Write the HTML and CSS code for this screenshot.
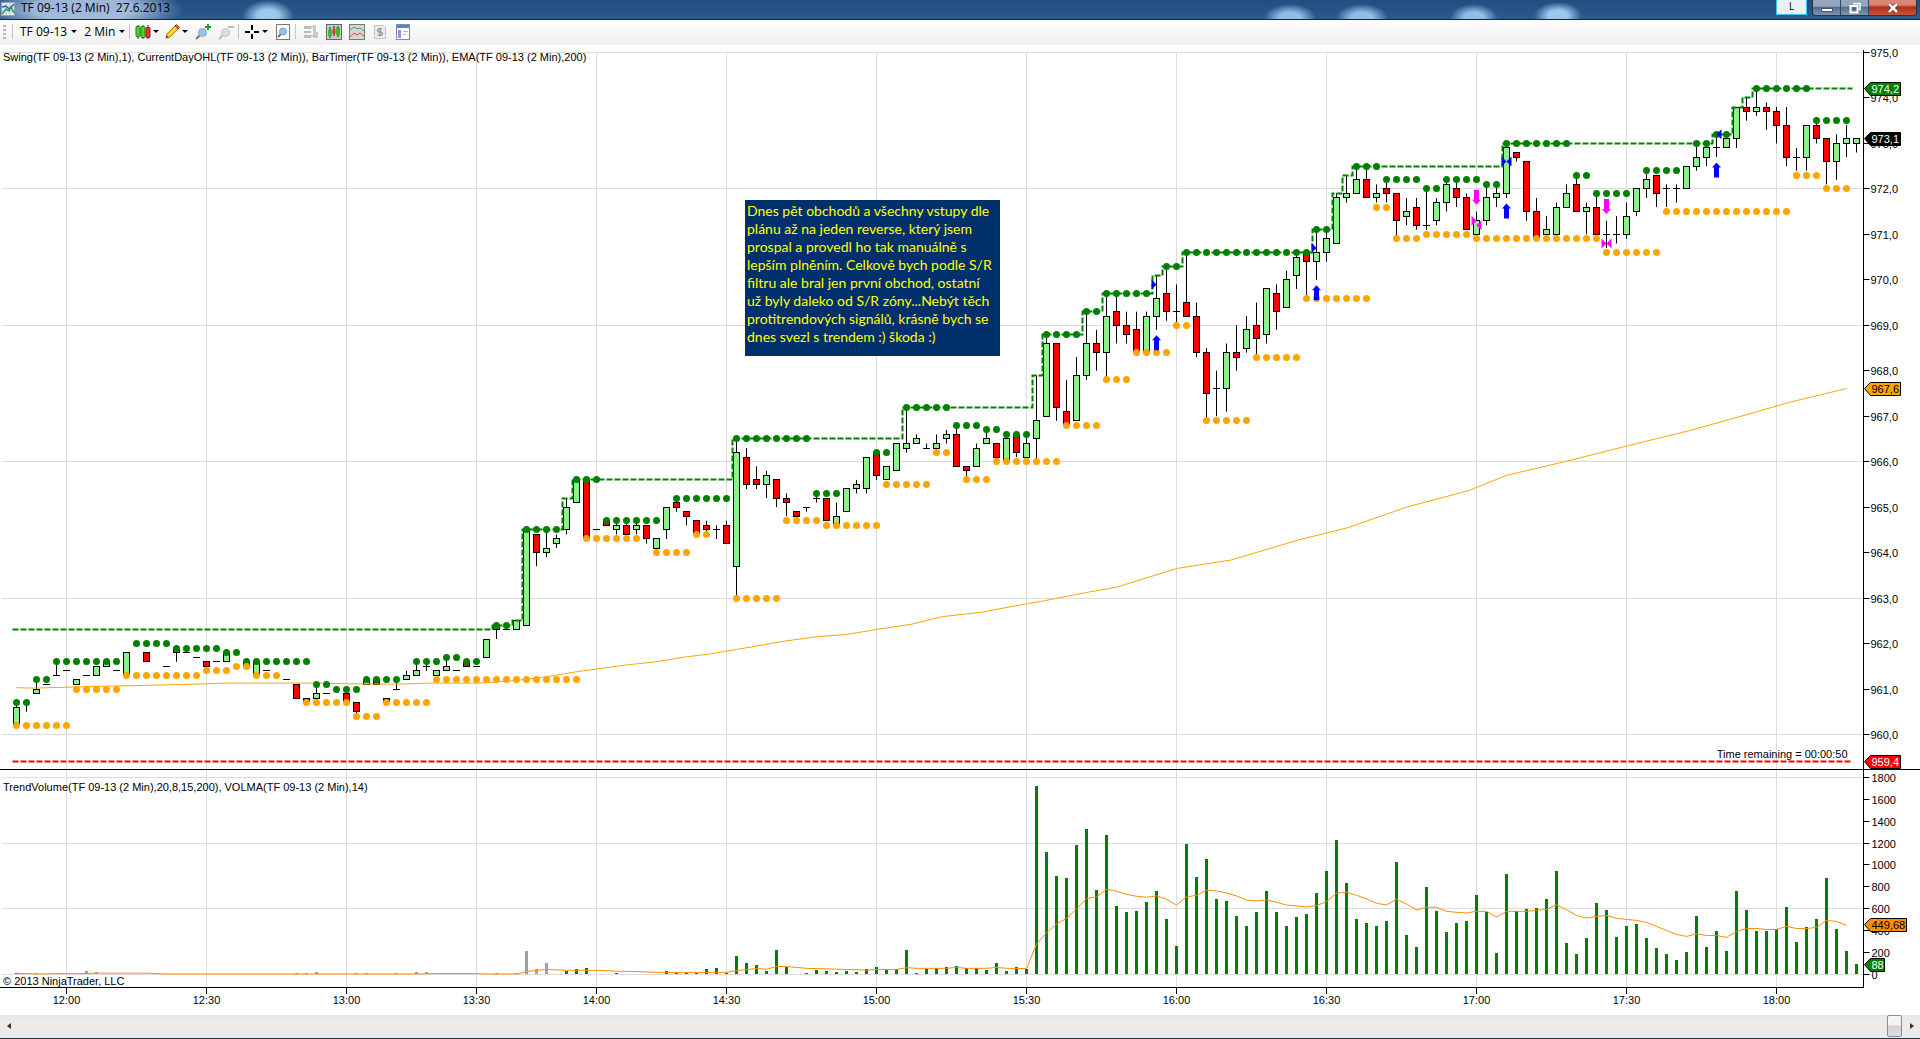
FILE: index.html
```html
<!DOCTYPE html>
<html lang="cs">

<head>
  <meta charset="UTF-8" />
  <meta name="viewport" content="width=device-width, initial-scale=1.0" />
  <title>TF 09-13 (2 Min) 27.6.2013</title>
  <link rel="stylesheet" href="styles.css">
</head>

<body>
  <!-- TITLE BAR -->
  <header class="titlebar">
    <svg class="app-icon" viewBox="0 0 14 14" width="14" height="14">
      <rect x="0.5" y="0.5" width="13" height="13" fill="#e4edf5" stroke="#8fa3b5" />
      <path d="M1 5h12M1 9h12M5 1v12M9 1v12" stroke="#b9c8d6" fill="none" />
      <path d="M1 5l4-1 3 3 5-5" stroke="#2b62c4" stroke-width="1.5" fill="none" />
      <path d="M1 12l4-5 3 2 2-4 3 6" stroke="#2e9a3c" stroke-width="1.5" fill="none" />
    </svg>
    <h1>TF 09-13 (2 Min)&nbsp; 27.6.2013</h1>
    <div class="lang">L</div>
    <div class="window-buttons">
      <button class="win" aria-label="Minimize">
        <svg viewBox="0 0 12 10" width="12" height="10"><rect x="0.5" y="5.5" width="11" height="3" fill="#fff" stroke="#4a5566" /></svg>
      </button>
      <button class="win" aria-label="Restore">
        <svg viewBox="0 0 12 12" width="12" height="12">
          <path d="M4 1.500h7v6h-3" fill="none" stroke="#fff" stroke-width="1.500" />
          <rect x="1.500" y="4" width="7" height="6.500" fill="none" stroke="#fff" stroke-width="2" />
          <rect x="4" y="6" width="2" height="2" fill="#4a5566" />
        </svg>
      </button>
      <button class="win close" aria-label="Close">
        <svg viewBox="0 0 12 10" width="12" height="10">
          <path d="M2 1l8 8M10 1l-8 8" stroke="#5a2a24" stroke-width="4" />
          <path d="M2 1l8 8M10 1l-8 8" stroke="#fff" stroke-width="2.500" />
        </svg>
      </button>
    </div>
  </header>

  <!-- TOOLBAR -->
  <nav class="toolbar">
    <span class="grip"></span>
    <span class="sep"></span>
    <button class="drop">TF 09-13<i class="caret"></i></button>
    <button class="drop">2 Min<i class="caret"></i></button>
    <span class="sep"></span>
    <button class="drop icon" aria-label="Chart style">
      <svg viewBox="0 0 16 16" width="16" height="16">
        <path d="M3 1v14M8 1v14M13 1v14" stroke="#333" />
        <rect x="1" y="2.500" width="4" height="10" rx="1" fill="#4fd32c" stroke="#1f7d10" />
        <rect x="6" y="2.500" width="4" height="11" rx="1" fill="#4fd32c" stroke="#1f7d10" />
        <rect x="11" y="3.500" width="4" height="10" rx="1" fill="#e8382c" stroke="#8d1711" />
      </svg><i class="caret"></i>
    </button>
    <button class="drop icon" aria-label="Drawing tools">
      <svg viewBox="0 0 16 16" width="16" height="16">
        <path d="M2 14l1-4 8-8 3 3-8 8z" fill="#f8d03c" stroke="#b47a12" />
        <path d="M11 2l1.500-1.500 3 3L14 5z" fill="#e4694f" stroke="#a33b2a" />
        <path d="M2 14l.6-2.500 2 2z" fill="#333" />
      </svg><i class="caret"></i>
    </button>
    <button class="icon" aria-label="Zoom in">
      <svg viewBox="0 0 16 16" width="16" height="16">
        <path d="M1 15l4-4" stroke="#777" stroke-width="2" />
        <circle cx="7.500" cy="8.500" r="4" fill="#8fc4ee" stroke="#9aa7b3" />
        <path d="M13 0v6M10 3h6" stroke="#14a32c" stroke-width="2" />
      </svg>
    </button>
    <button class="icon" aria-label="Zoom out" disabled>
      <svg viewBox="0 0 16 16" width="16" height="16">
        <path d="M1 15l4-4" stroke="#bbb" stroke-width="2" />
        <circle cx="7.500" cy="8.500" r="4" fill="#ddd" stroke="#c4c4c4" />
        <path d="M10 3h6" stroke="#bbb" stroke-width="2" />
      </svg>
    </button>
    <span class="sep"></span>
    <button class="drop icon" aria-label="Crosshair">
      <svg viewBox="0 0 16 16" width="16" height="16"><path d="M8 1v5M8 10v5M1 8h5M10 8h5" stroke="#000" stroke-width="2" /></svg><i class="caret"></i>
    </button>
    <button class="icon" aria-label="Data box">
      <svg viewBox="0 0 16 16" width="16" height="16">
        <rect x="1.500" y="0.500" width="13" height="15" fill="#fff" stroke="#777" />
        <path d="M3 13l3-3" stroke="#666" stroke-width="2" />
        <circle cx="8" cy="7.500" r="3.500" fill="#8fc4ee" stroke="#8da0b3" />
      </svg>
    </button>
    <span class="sep"></span>
    <button class="icon" aria-label="Chart trader" disabled>
      <svg viewBox="0 0 16 16" width="16" height="16">
        <path d="M1 2h7v3H1zM1 7h7v2H1zM1 11h7v3H1z" fill="#bcbcbc" />
        <path d="M8 3h3M8 12h3" stroke="#a8a8a8" />
        <path d="M10 1h3v7h2v6h-5z" fill="#c9c9c9" />
      </svg>
    </button>
    <button class="icon" aria-label="Data series">
      <svg viewBox="0 0 16 16" width="16" height="16">
        <rect x="0.500" y="0.500" width="15" height="15" fill="#c9c9c9" stroke="#666" />
        <path d="M4 3v11M8 2v10M12 2v11" stroke="#222" />
        <rect x="2" y="6" width="4" height="6" fill="#35c21f" />
        <rect x="6.500" y="5" width="3" height="5" fill="#e33227" />
        <rect x="10" y="3" width="4" height="8" fill="#35c21f" />
      </svg>
    </button>
    <button class="icon" aria-label="Indicators">
      <svg viewBox="0 0 16 16" width="16" height="16">
        <rect x="0.500" y="0.500" width="15" height="15" fill="#d6d6d6" stroke="#777" />
        <path d="M1 6l4-3 3 2 3-1 4 3" stroke="#3aa35c" fill="none" />
        <path d="M1 13l4-4 3 2 3-2 4 3" stroke="#e0473c" fill="none" />
      </svg>
    </button>
    <button class="icon" aria-label="Strategies" disabled>
      <svg viewBox="0 0 16 16" width="16" height="16">
        <path d="M2.500 1.500h9l2 2v11h-11z" fill="#ececec" stroke="#c4c4c4" />
        <path d="M10 5H7Q5.500 5 5.500 6.500T7 8h2q1.500 0 1.500 1.500T9 11H5.500M8 3.500v9" fill="none" stroke="#9c9c9c" stroke-width="1.500" />
      </svg>
    </button>
    <button class="icon" aria-label="Properties">
      <svg viewBox="0 0 16 16" width="16" height="16">
        <rect x="1.500" y="0.500" width="13" height="15" fill="#fff" stroke="#7b8aa5" />
        <rect x="2" y="1" width="12" height="3" fill="#4f86dc" />
        <rect x="3" y="6" width="3" height="8" fill="#a884ea" />
        <path d="M8 7.500h5M8 10.500h3" stroke="#b9b4d6" />
      </svg>
    </button>
  </nav>

  <!-- CHART -->
  <main class="chart">
    <svg id="price" class="pane price"></svg>
    <svg id="volume" class="pane volume"></svg>
    <svg id="time" class="time"></svg>
    <p class="note">Dnes pět obchodů a všechny vstupy dle<br>plánu až na jeden reverse, který jsem<br>prospal a provedl ho tak manuálně s<br>lepším plněním. Celkově bych podle S/R<br>filtru ale bral jen první obchod, ostatní<br>už byly daleko od S/R zóny...Nebýt těch<br>protitrendových signálů, krásně bych se<br>dnes svezl s trendem :) škoda :)</p>
  </main>

  <footer class="scrollbar">
    <button class="arrow left" aria-label="Scroll left"></button>
    <div class="track"><button class="thumb" aria-label="Scroll position"></button></div>
    <button class="arrow right" aria-label="Scroll right"></button>
  </footer>

  <script src="chart.js"></script>
</body>

</html>
```
FILE: styles.css
```css
* {
  box-sizing: border-box;
}

body {
  margin: 0;
  height: 100vh;
  display: flex;
  flex-direction: column;
  overflow: hidden;
  background: #fff;
  border-bottom: 1px solid #1c3448;
  font-family: "Open Sans", "Noto Sans", sans-serif;
  font-size: 12px;
  color: #000;
}

button {
  border: 0;
  padding: 0;
  margin: 0;
  background: none;
  font: inherit;
  color: inherit;
}

/* title bar */
.titlebar {
  height: 20px;
  flex: none;
  display: flex;
  align-items: flex-start;
  border-bottom: 1px solid #14243c;
  background:
    radial-gradient(ellipse 100px 26px at 84px 9px, rgba(190, 210, 236, 0.8) 50%, rgba(190, 210, 236, 0) 100%),
    radial-gradient(ellipse 26px 16px at 268px 16px, #9cc8ee 40%, transparent 100%),
    radial-gradient(ellipse 26px 14px at 1290px 18px, #8fbfe8 40%, transparent 100%),
    radial-gradient(ellipse 26px 14px at 1362px 18px, #8fbfe8 40%, transparent 100%),
    radial-gradient(ellipse 24px 14px at 1474px 18px, #8fbfe8 40%, transparent 100%),
    radial-gradient(ellipse 24px 14px at 1558px 16px, #9cc8ee 40%, transparent 100%),
    linear-gradient(#214d80, #2a5a90);
}

.app-icon {
  margin: 2px 6px 0 1px;
}

.titlebar h1 {
  margin: 0;
  flex: 1;
  font-size: 12px;
  line-height: 16px;
  font-weight: normal;
}

.lang {
  width: 31px;
  height: 15px;
  margin-right: 5px;
  border: 1px solid #38c8ec;
  border-top: 0;
  background: #e9f0f6;
  font-size: 10px;
  line-height: 12px;
  text-align: center;
}

.window-buttons {
  display: flex;
  height: 16px;
  margin-right: 3px;
  border: 1px solid #2a3340;
  border-top: 0;
  border-radius: 0 0 4px 4px;
  overflow: hidden;
}

.win {
  width: 28px;
  display: flex;
  align-items: center;
  justify-content: center;
  border-right: 1px solid #33455c;
  background: linear-gradient(#93a6bd 40%, #54708f 50%, #7d95ae);
}

.win.close {
  width: 47px;
  border-right: 0;
  background: linear-gradient(#d98674 30%, #b5301b 50%, #c9553c);
}

/* toolbar */
.toolbar {
  height: 25px;
  flex: none;
  display: flex;
  align-items: center;
  padding: 0 0 2px 3px;
  background: linear-gradient(#fdfdfd, #efefef);
}

.grip {
  width: 3px;
  height: 14px;
  margin-right: 6px;
  background: repeating-linear-gradient(#b4b4b4 0 2px, transparent 2px 4px);
}

.sep {
  width: 1px;
  height: 15px;
  margin: 0 4px 0 0;
  background: #c4c4c4;
}

.drop {
  display: flex;
  align-items: center;
  gap: 4px;
  padding: 0 4px 0 3px;
}

.icon {
  display: flex;
  padding: 0 4px 0 3px;
}

.drop.icon {
  align-items: center;
  gap: 2px;
  padding: 0 4px 0 1px;
}

.caret {
  border: 3px solid transparent;
  border-top-color: #000;
  border-bottom: 0;
}

/* chart */
.chart {
  position: relative;
  flex: 1;
  min-height: 0;
  display: flex;
  flex-direction: column;
  font-family: "Liberation Sans", Arial, sans-serif;
}

.pane {
  width: 100%;
  min-height: 0;
}

.price {
  flex: 725 0 0;
}

.volume {
  flex: 218 0 0;
  border-top: 1px solid #000;
}

.time {
  width: 100%;
  height: 27px;
  flex: none;
}

.chart text {
  font-size: 11px;
}

.time text {
  text-anchor: middle;
}

.grid {
  stroke: #dcdcdc;
}

.axis {
  stroke: #000;
}

.up {
  fill: #90ee90;
  stroke: #000;
}

.down {
  fill: #f00;
  stroke: #000;
}

.note {
  position: absolute;
  left: 745px;
  top: 155px;
  width: 255px;
  height: 156px;
  margin: 0;
  padding: 2px;
  background: #00306c;
  color: #ff0;
  font-family: "Lato", "Open Sans", sans-serif;
  font-size: 14px;
  line-height: 18px;
  white-space: nowrap;
}

/* scrollbar */
.scrollbar {
  height: 23px;
  flex: none;
  display: flex;
  align-items: stretch;
  padding-bottom: 1px;
  background: linear-gradient(#e3e3e3, #ebebeb 3px);
}

.arrow {
  width: 17px;
  display: flex;
  align-items: center;
  justify-content: center;
}

.arrow::before {
  content: "";
  border: 3px solid transparent;
}

.arrow.left::before {
  border-left: 0;
  border-right: 4px solid #333;
}

.arrow.right::before {
  border-right: 0;
  border-left: 4px solid #333;
}

.track {
  flex: 1;
  display: flex;
  justify-content: flex-end;
}

.thumb {
  width: 15px;
  margin-right: 1px;
  border: 1px solid #8c8c8c;
  border-radius: 2px;
  background: linear-gradient(#f4f4f4 45%, #d2d2d6 50%, #dedee2);
}
```
FILE: chart.js
```js
const AXIS = 56;   // width of the price scale
const STEP = 10;   // distance between bars
const BASE = 950;  // prices below are ticks (0.1) above this

// open, high, low, close
const bars = [
  [102,107,102,106],[107,107,105,107],[109,112,109,110],[111,111,111,111],[113,116,113,113],
  [114,114,114,114],[111,112,111,112],[113,113,113,113],[113,115,113,115],[115,116,115,116],
  [114,114,114,114],[113,118,113,118],[120,120,120,120],[118,118,116,116],[113,113,113,113],
  [115,115,115,115],[118,119,116,119],[118,119,118,118],[117,117,117,117],[116,116,115,115],
  [116,116,116,116],[116,118,116,118],[115,115,115,115],[116,116,115,115],[113,116,113,116],
  [114,114,114,114],[113,113,113,113],[112,112,112,112],[111,111,108,108],[108,108,107,107],
  [108,111,108,109],[109,109,109,109],[110,110,110,110],[109,109,107,107],[107,107,104,105],
  [111,112,111,112],[112,112,111,111],[108,108,107,107],[110,112,110,110],[112,114,112,113],
  [113,116,113,114],[115,116,114,115],[113,114,113,114],[114,117,114,115],[114,114,114,114],
  [116,116,115,115],[115,115,115,115],[117,121,117,121],[123,124,121,124],[123,123,123,123],
  [123,125,123,125],[124,145,124,145],[144,144,137,140],[140,145,139,141],[142,144,141,143],
  [145,152,144,150],[151,156,151,156],[156,156,143,143],[145,145,145,145],[147,147,146,146],
  [145,147,144,146],[146,147,144,144],[145,147,144,146],[146,146,142,143],[141,143,140,143],
  [145,150,143,150],[151,152,149,150],[149,149,146,148],[147,147,144,144],[146,147,144,145],
  [145,146,143,145],[146,147,142,142],[137,165,130,162],[161,163,154,155],[156,159,154,155],
  [155,158,152,157],[156,156,150,152],[152,153,148,151],[149,149,148,148],[150,150,149,150],
  [152,153,151,152],[152,152,147,147],[146,151,146,148],[149,154,149,154],[154,156,153,155],
  [154,161,153,161],[162,162,156,157],[156,159,156,159],[158,164,158,164],[163,172,162,164],
  [164,166,164,165],[163,164,163,163],[163,166,162,164],[165,167,164,166],[166,168,159,159],
  [159,159,156,158],[159,164,159,163],[164,167,164,165],[164,164,160,161],[160,166,160,165],
  [166,166,161,162],[161,166,161,164],[165,179,160,169],[170,188,170,186],[186,186,169,172],
  [171,178,168,168],[169,183,169,179],[179,193,178,186],[186,189,180,184],[184,197,178,192],
  [193,197,186,190],[190,193,186,188],[189,193,184,184],[184,193,184,192],[192,201,189,196],
  [197,203,191,193],[193,199,190,193],[195,206,192,192],[192,195,183,184],[184,185,169,175],
  [176,180,170,176],[176,186,171,184],[184,190,180,183],[185,192,184,189],[190,195,183,187],
  [188,198,186,198],[197,199,189,193],[194,202,194,200],[201,206,198,205],[206,206,196,204],
  [204,211,200,206],[206,211,204,209],[208,219,208,218],[218,223,217,219],[219,225,219,222],
  [222,225,218,218],[218,221,217,219],[220,222,217,219],[219,219,209,213],[214,218,212,215],
  [216,218,211,212],[212,220,211,212],[213,218,212,217],[217,222,215,221],[220,222,216,218],
  [218,219,211,211],[210,215,209,213],[213,221,212,218],[218,221,216,219],[219,230,218,229],
  [228,228,226,227],[226,226,213,215],[215,218,209,209],[210,214,209,211],[210,217,209,216],
  [216,221,216,219],[221,223,215,215],[215,217,210,216],[216,219,210,210],[210,213,207,210],
  [210,214,208,210],[210,217,209,214],[215,220,214,220],[220,224,218,222],[223,223,216,219],
  [220,221,216,220],[220,221,217,220],[220,225,220,225],[225,230,224,227],[227,230,225,229],
  [229,232,227,229],[229,232,229,231],[231,238,229,238],[238,240,235,237],[237,242,236,238],
  [238,239,233,237],[237,238,230,234],[234,238,225,227],[227,229,224,227],[227,234,224,234],
  [234,235,230,231],[231,231,221,226],[226,232,222,230],[230,234,227,231],[230,231,228,231]
];

// swing dots: first bar, last bar, level
const swingHigh = [
  [0,1,107],[2,3,112],[4,10,116],[12,15,120],[16,20,119],[21,22,118],[23,29,116],[30,31,111],
  [32,34,110],[35,38,112],[40,42,116],[43,44,117],[45,46,116],[48,49,124],[51,54,145],[56,58,156],
  [59,64,147],[66,71,152],[72,79,165],[80,82,153],[86,87,162],[89,93,172],[94,96,168],[97,98,167],
  [99,101,166],[103,106,188],[107,108,193],[109,113,197],[115,116,203],[117,129,206],[130,131,211],
  [134,136,225],[137,140,222],[141,142,220],[143,146,222],[147,148,221],[149,155,230],[156,157,223],
  [158,161,219],[163,166,224],[168,169,230],[170,171,232],[174,179,242],[180,183,235]
];
const swingLow = [
  [0,5,102],[6,10,110],[11,18,113],[19,21,114],[22,23,115],[24,26,113],[29,33,107],[34,36,104],
  [37,41,107],[42,56,112],[57,62,143],[64,67,140],[68,69,144],[72,76,130],[77,80,147],[81,86,146],
  [87,91,155],[92,93,162],[95,97,156],[98,104,160],[105,108,168],[109,111,178],[112,115,184],
  [116,117,190],[119,123,169],[124,128,183],[129,135,196],[136,137,216],[138,140,209],[141,145,210],
  [146,158,209],[159,164,206],[165,177,215],[178,180,223],[181,183,220]
];

// current day high: bar, new level
const dayHigh = [
  [48,124],[50,125],[51,145],[55,152],[56,156],[72,165],[89,172],[102,179],[103,188],[107,193],
  [109,197],[114,201],[115,203],[117,206],[130,211],[132,219],[133,223],[134,225],[149,230],
  [170,232],[172,238],[173,240],[174,242]
];

const ema = [
  [0,110.3],[1.7,110.2],[6.7,110.5],[10.7,110.7],[16.7,111],[21,111.3],[30,111.3],[34.7,111.1],
  [38.4,111.1],[41.4,111.3],[46.4,111.3],[47,111.4],[50,111.9],[53,112.7],[56,113.8],[58,114.4],
  [61,115.3],[64,116],[67,117.1],[69,117.6],[72,118.7],[77,120.6],[80,121.5],[83,122],[86,123.1],
  [89.6,124.3],[92.5,125.9],[96.5,126.9],[100.4,128.5],[102.5,129.3],[107.4,131.4],[110,132.4],
  [116,136.5],[121.5,138.4],[128.2,142.8],[133,145.4],[139,150],[145.3,153.7],[149,157],[155,160.1],
  [161.3,163.6],[167.4,166.9],[172.3,169.9],[177.2,173],[183,176.1]
];

// volume by bar, quiet bars are left out
const earlyVolume = {
  0:8, 2:5, 7:25, 8:14, 28:6, 29:6, 30:14, 34:6, 35:6, 38:6, 40:14, 41:14, 48:5, 50:5, 51:212,
  52:46, 53:101, 55:28, 56:46, 57:55, 60:8, 65:28, 66:8, 67:8, 68:8, 69:46, 70:55, 71:8, 72:166,
  73:101, 74:83, 75:28, 76:221, 77:64, 79:8, 80:37, 81:28, 82:18, 83:28, 84:18, 85:46, 86:64,
  87:37, 88:46, 89:221, 90:8, 91:46, 92:55, 93:64, 94:74, 95:55, 96:55, 97:37, 98:101, 99:28,
  100:64, 101:46
};
// every bar from 15:32 on
const dayVolume = [
  1722,1114,902,875,1179,1326,773,1271,626,571,580,663,764,506,258,1188,884,1050,691,672,534,442,
  571,764,571,442,525,552,746,939,1225,838,506,470,442,488,1022,359,249,801,580,387,470,488,727,
  571,193,912,580,599,608,691,939,285,184,331,654,589,341,442,460,331,239,184,129,203,534,249,396,
  212,764,589,396,396,414,617,295,433,506,875,414,212,88
];

const earlyMa = [
  [0,6],[2,0],[5,5],[6,2],[8,8],[13,8],[15,0],[40,0],[42,5],[46,4],[47,0],[50,0],[51,22],[53,42],
  [55,34],[58,34],[60,26],[62,22],[64,15],[71,15],[72,30],[74,50],[75,44],[76,68],[77,68],[79,52],
  [82,44],[85,36],[86,42],[88,42],[89,58],[90,52],[93,52],[94,60],[95,52],[97,52],[98,60],[99,52],
  [101,50]
];
const dayMa = [
  273,378,457,510,595,691,706,777,758,730,712,703,715,684,632,706,721,767,761,743,715,678,669,678,
  657,632,623,614,626,663,740,749,721,688,648,632,684,641,586,611,611,574,565,559,574,574,522,574,
  574,574,583,592,635,589,537,513,528,537,510,500,491,473,436,399,362,344,368,353,353,335,390,417,
  417,408,408,436,417,417,427,491,482,445
];

const times = [
  [5,'12:00'],[19,'12:30'],[33,'13:00'],[46,'13:30'],[58,'14:00'],[71,'14:30'],[86,'15:00'],
  [101,'15:30'],[116,'16:00'],[131,'16:30'],[146,'17:00'],[161,'17:30'],[176,'18:00']
];

// trades: bar, level, side of the bar, colour
const fills = [
  [114,199,-1,'#00f'],[130,207,-1,'#00f'],[149,226,-1,'#00f'],[149,226,1,'#00f'],[170,232,1,'#00f'],
  [146,213,-1,'#f0f'],[146,212,1,'#f0f'],[159,208,-1,'#f0f'],[159,208,1,'#f0f']
];
const buys = [114, 130, 149, 170];
const sells = [146, 159];

const snap = v => Math.floor(v) + 0.5;
const line = (x1, y1, x2, y2, cls) => `<line class="${cls}" x1="${x1}" y1="${y1}" x2="${x2}" y2="${y2}"/>`;
const text = (x, y, s, extra = '') => `<text x="${x}" y="${y}" ${extra}>${s}</text>`;
const path = (pts, extra) => `<polyline points="${pts.map(p => p.join()).join(' ')}" fill="none" ${extra}/>`;

const tag = (x, y, w, s, bg, fg) =>
  `<path d="M${x + 1} ${y}l6-6h${w}v13h-${w}z" fill="${bg}" stroke="#000"/>` + text(x + 8, y + 4, s, `fill="${fg}"`);

function draw() {
  const price = document.getElementById('price');
  const volume = document.getElementById('volume');
  const time = document.getElementById('time');
  const W = price.clientWidth;
  const right = W - AXIS - 0.5;
  const X = i => right - 7 - STEP * (bars.length - 1 - i);
  const verticals = (top, bottom) => times.map(([i]) => line(X(i), top, X(i), bottom, 'grid')).join('');

  // price
  const H = price.clientHeight;
  const Y = t => 7.5 + (250 - t) * (H - 42) / 150;
  let s = verticals(7, H);
  for (let p = 975; p >= 960; p--) {
    const y = snap(Y((p - BASE) * 10));
    if (p % 3 === 0) s += line(2, y, right, y, 'grid');
    s += line(right, y, right + 6, y, 'axis') + text(right + 7, y + 4, p + ',0');
  }
  s += line(right, 5, right, H, 'axis');
  s += text(3, 16, 'Swing(TF 09-13 (2 Min),1), CurrentDayOHL(TF 09-13 (2 Min)), BarTimer(TF 09-13 (2 Min)), EMA(TF 09-13 (2 Min),200)');

  bars.forEach(([o, h, l, c], i) => {
    const x = X(i);
    if (h > l) s += line(x, Y(h), x, Y(l), 'axis');
    if (o === c) {
      s += line(x - 3.5, snap(Y(c)), x + 3.5, snap(Y(c)), 'axis');
    } else {
      const top = snap(Y(Math.max(o, c)));
      s += `<rect class="${c > o ? 'up' : 'down'}" x="${x - 3}" y="${top}" width="6" height="${snap(Y(Math.min(o, c))) - top}"/>`;
    }
  });

  let level = 123;
  const steps = [[X(0) - 4, snap(Y(level))]];
  dayHigh.forEach(([i, t]) => {
    steps.push([X(i) - 4, snap(Y(level))], [X(i) - 4, snap(Y(t))]);
    level = t;
  });
  steps.push([X(183) + 6, snap(Y(level))]);
  s += path(steps, 'stroke="#008000" stroke-width="2" stroke-dasharray="6 2"');
  s += path([[X(0) - 4, snap(Y(94))], [X(183) + 6, snap(Y(94))]], 'stroke="#f00" stroke-width="2" stroke-dasharray="6 2"');
  s += path(ema.map(([i, t]) => [X(i), Y(t)]), 'stroke="#ffa500"');

  [[swingHigh, '#008000'], [swingLow, '#ffa500']].forEach(([list, colour]) => {
    list.forEach(([a, b, t]) => {
      for (let i = a; i <= b; i++) s += `<circle cx="${X(i)}" cy="${snap(Y(t))}" r="3.5" fill="${colour}"/>`;
    });
  });

  fills.forEach(([i, t, side, colour]) => {
    s += `<path d="M${X(i)} ${Y(t)}l${5 * side}-5v10z" fill="${colour}"/>`;
  });
  buys.forEach(i => {
    s += `<path d="M${X(i)} ${Y(bars[i][2] - 1.2)}l4.500 5h-2v10h-5v-10h-2z" fill="#00f"/>`;
  });
  sells.forEach(i => {
    s += `<path d="M${X(i)} ${Y(bars[i][1] + 1.5)}l4.500-5h-2v-10h-5v10h-2z" fill="#f0f"/>`;
  });

  s += text(right - 16, H - 11, 'Time remaining = 00:00:50', 'text-anchor="end"');
  s += tag(right, snap(Y(242)), 30, '974,2', '#008000', '#fff');
  s += tag(right, snap(Y(231)), 30, '973,1', '#000', '#fff');
  s += tag(right, snap(Y(176)), 30, '967,6', '#ffa500', '#000');
  s += tag(right, snap(Y(94)), 30, '959,4', '#f00', '#fff');
  price.innerHTML = s;

  // volume
  const VH = volume.clientHeight;
  const zero = VH - 14;
  const V = v => zero - v * (zero - 7.5) / 1800;
  s = verticals(0, VH);
  for (let v = 0; v <= 1800; v += 200) {
    const y = snap(V(v));
    if (v % 600 === 0) s += line(2, y, right, y, 'grid');
    s += line(right, y, right + 6, y, 'axis') + text(right + 8, y + 4, v);
  }
  const volumeBar = (i, v, colour) => {
    const y = Math.round(V(v));
    return `<rect x="${X(i) - 1.5}" y="${y}" width="3" height="${zero - y}" fill="${colour}"/>`;
  };
  Object.entries(earlyVolume).forEach(([i, v]) => {
    s += volumeBar(+i, v, i === '0' ? '#f00' : i < 54 ? '#a0a0a0' : '#008000');
  });
  dayVolume.forEach((v, n) => s += volumeBar(102 + n, v, '#008000'));
  const ma = earlyMa.concat(dayMa.map((v, n) => [102 + n, v]));
  s += path(ma.map(([i, v]) => [X(i), V(v)]), 'stroke="#ff8c00"');
  s += line(right, 0, right, VH, 'axis') + line(0, VH - 0.5, right, VH - 0.5, 'axis');
  s += text(3, 21, 'TrendVolume(TF 09-13 (2 Min),20,8,15,200), VOLMA(TF 09-13 (2 Min),14)');
  s += text(3, VH - 3, '© 2013 NinjaTrader, LLC');
  s += tag(right, snap(V(449.68)), 36, '449,68', '#ff8c00', '#000');
  s += tag(right, snap(V(88)), 14, '88', '#008000', '#fff');
  volume.innerHTML = s;

  // time scale
  time.innerHTML = times.map(([i, label]) => line(X(i), 0, X(i), 6, 'axis') + text(X(i), 16, label)).join('');
}

draw();
window.addEventListener('resize', draw);
```
